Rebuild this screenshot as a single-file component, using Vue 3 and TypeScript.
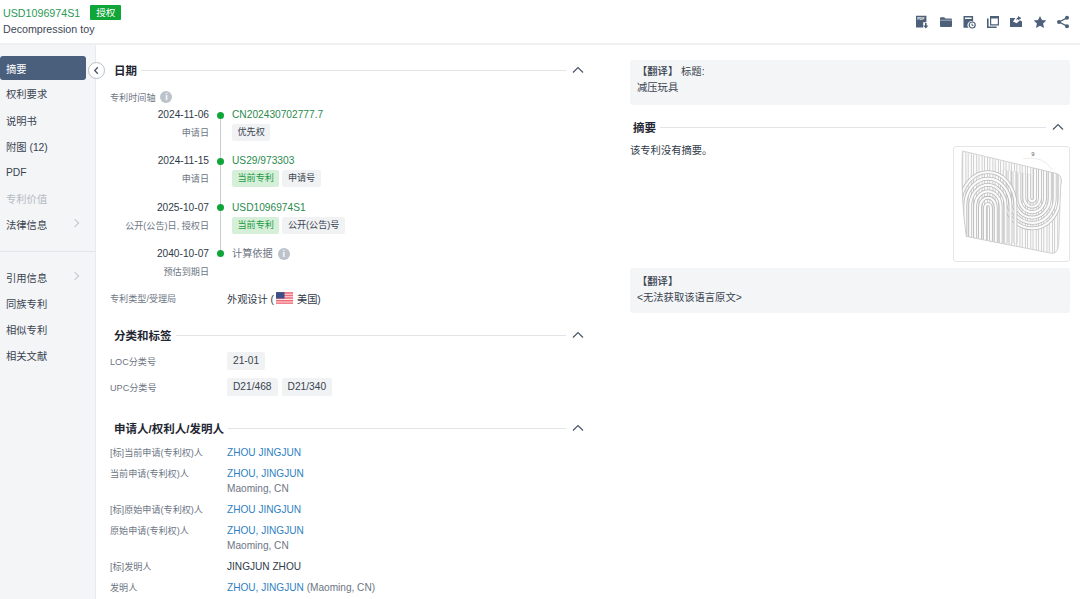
<script setup lang="ts">
interface TimeRow { date: string; label: string; link: string; muted?: boolean; tags: { t: string; on?: boolean }[] }
const rows: TimeRow[] = [
  { date: '2024-11-06', label: '申请日', link: 'CN202430702777.7', tags: [{ t: '优先权' }] },
  { date: '2024-11-15', label: '申请日', link: 'US29/973303', tags: [{ t: '当前专利', on: true }, { t: '申请号' }] },
  { date: '2025-10-07', label: '公开(公告)日, 授权日', link: 'USD1096974S1', tags: [{ t: '当前专利', on: true }, { t: '公开(公告)号' }] },
  { date: '2040-10-07', label: '预估到期日', link: '计算依据', muted: true, tags: [] },
]
const people = [
  { k: '[标]当前申请(专利权)人', v: 'ZHOU JINGJUN' },
  { k: '当前申请(专利权)人', v: 'ZHOU, JINGJUN', sub: 'Maoming, CN' },
  { k: '[标]原始申请(专利权)人', v: 'ZHOU JINGJUN' },
  { k: '原始申请(专利权)人', v: 'ZHOU, JINGJUN', sub: 'Maoming, CN' },
]
const stripes: string[] = Array.from({ length: 18 }, (_, i) => {
  const x = 10 + i * 5.5
  return `M${x} ${5 + (x - 9) * 0.23}V${91 + (x - 12) * 0.2}`
})
const radii = [3, 8, 13, 18, 23, 28]
const leftArches: string[] = radii.map(r => `M${34 - r} ${92 + (34 - r) * 0.1}V${62 - r * 0.1}A${r} ${r * 1.2} 0 0 1 ${34 + r} ${62 - r * 0.1}V${98}`)
const rightArches: string[] = radii.map(r => `M${79 - r} ${14 + (79 - r) * 0.18}V${52}A${r} ${r * 1.1} 0 0 0 ${79 + r} ${52}V${22}`)
</script>

<template>
  <div class="page">
    <header class="top">
      <div>
        <div class="idline"><span class="pid">USD1096974S1</span><span class="badge">授权</span></div>
        <div class="title">Decompression toy</div>
      </div>
      <div class="tools">
        <svg viewBox="0 0 14 14"><path d="M1 .8h10.4v6.4H8.2v5.4H1z"/><text x="2.2" y="5" font-size="3.6" fill="#fff" font-family="Liberation Sans" font-weight="700">PDF</text><path d="M10 8h1.6v2.6h1.8l-2.6 2.8-2.6-2.8H10z"/></svg>
        <svg viewBox="0 0 14 14"><path d="M1 3.2q0-1 1-1h3.2l1.2 1.3H12q1 0 1 1v6.6q0 1-1 1H2q-1 0-1-1z"/><path d="M1 5.2h12" stroke="#fff" stroke-width=".5"/></svg>
        <svg viewBox="0 0 14 14"><path d="M1.5 1h9.6v5.4a4 4 0 0 0-4.6 6.3H1.5zM3 2.6v1.5h6.6V2.6z" fill-rule="evenodd"/><circle cx="10.2" cy="10" r="3" fill="none" stroke="#4d6079" stroke-width="1.2"/><path d="M10 8.6v1.8h1.4" fill="none" stroke="#4d6079"/></svg>
        <svg viewBox="0 0 14 14"><path d="M4 1h9v9.4H4zM5.2 3.6v5.6h6.6V3.6z" fill-rule="evenodd"/><path d="M1 3.6h1.6v8h8V13H1z"/></svg>
        <svg viewBox="0 0 14 14"><path d="M1 3h5.4L4 6.6l3.6 1.6L11 5.2l2 1.2V12H1z"/><path d="M9 1l3.4 2.2L9 5.2V4L7 5.2 8 3l1-.6z"/></svg>
        <svg viewBox="0 0 14 14"><path d="M7 1l1.9 4 4.4.5-3.2 3 .9 4.4L7 10.7l-4 2.2.9-4.4-3.2-3 4.4-.5z"/></svg>
        <svg viewBox="0 0 14 14"><circle cx="11" cy="2.8" r="2"/><circle cx="3" cy="7" r="2"/><circle cx="11" cy="11.2" r="2"/><path d="M3 7l8-4.2M3 7l8 4.2" stroke="#4d6079" stroke-width="1.3" fill="none"/></svg>
      </div>
    </header>

    <div class="body">
      <nav class="side">
        <a class="item active">摘要</a>
        <a class="item">权利要求</a>
        <a class="item">说明书</a>
        <a class="item">附图 (12)</a>
        <a class="item">PDF</a>
        <a class="item off">专利价值</a>
        <a class="item">法律信息<i class="chev" /></a>
        <div class="rule" />
        <a class="item">引用信息<i class="chev" /></a>
        <a class="item">同族专利</a>
        <a class="item">相似专利</a>
        <a class="item">相关文献</a>
        <button class="collapse" aria-label="收起"><svg viewBox="0 0 10 10"><path d="M6.2 2L3.4 5l2.8 3" fill="none" stroke="#4a5568" stroke-width="1.2"/></svg></button>
      </nav>

      <main class="left">
        <section class="sec first">
          <div class="head"><h2>日期</h2><span class="line" /><svg class="up" viewBox="0 0 12 8"><path d="M1 6.5L6 1.5l5 5" fill="none" stroke="#4a5568" stroke-width="1.2"/></svg></div>
          <div class="tlhead">专利时间轴<span class="info">i</span></div>
          <div class="timeline">
            <div v-for="(r, i) in rows" :key="r.date" class="trow">
              <div class="tdate"><div class="d">{{ r.date }}</div><div class="dl">{{ r.label }}</div></div>
              <div class="tmark" :class="{ last: i === rows.length - 1 }"><span class="dot" /></div>
              <div class="tinfo">
                <div :class="r.muted ? 'calc' : 'glink'">{{ r.link }}<span v-if="r.muted" class="info">i</span></div>
                <div class="tags"><span v-for="t in r.tags" :key="t.t" class="tag" :class="{ on: t.on }">{{ t.t }}</span></div>
              </div>
            </div>
          </div>
          <div class="kv kind">
            <span class="k">专利类型/受理局</span>
            <span class="v">外观设计 (<svg class="flag" viewBox="0 0 16 11"><rect width="16" height="11" fill="#f06a78"/><path d="M0 2h16M0 4.4h16M0 6.8h16M0 9.2h16" stroke="#fbe4e6"/><rect width="8" height="6" fill="#3d4f85"/></svg>美国)</span>
          </div>
        </section>

        <section class="sec s2">
          <div class="head"><h2>分类和标签</h2><span class="line" /><svg class="up" viewBox="0 0 12 8"><path d="M1 6.5L6 1.5l5 5" fill="none" stroke="#4a5568" stroke-width="1.2"/></svg></div>
          <div class="kv cls"><span class="k">LOC分类号</span><span class="tags"><span class="tag big">21-01</span></span></div>
          <div class="kv cls"><span class="k">UPC分类号</span><span class="tags"><span class="tag big">D21/468</span><span class="tag big">D21/340</span></span></div>
        </section>

        <section class="sec s3">
          <div class="head"><h2>申请人/权利人/发明人</h2><span class="line" /><svg class="up" viewBox="0 0 12 8"><path d="M1 6.5L6 1.5l5 5" fill="none" stroke="#4a5568" stroke-width="1.2"/></svg></div>
          <div class="people">
            <div v-for="(p, i) in people" :key="i" class="kv person">
              <span class="k">{{ p.k }}</span>
              <span class="v"><span class="blue">{{ p.v }}</span><span v-if="p.sub" class="sub">{{ p.sub }}</span></span>
            </div>
            <div class="kv person"><span class="k">[标]发明人</span><span class="v dark">JINGJUN ZHOU</span></div>
            <div class="kv person"><span class="k">发明人</span><span class="v"><span class="blue">ZHOU, JINGJUN</span> <span class="gray">(Maoming, CN)</span></span></div>
          </div>
        </section>
      </main>

      <aside class="right">
        <div class="box t1"><div><b>【翻译】</b> 标题:</div><div>减压玩具</div></div>
        <div class="head abs"><h2>摘要</h2><span class="line" /><svg class="up" viewBox="0 0 12 8"><path d="M1 6.5L6 1.5l5 5" fill="none" stroke="#4a5568" stroke-width="1.2"/></svg></div>
        <div class="absbody">
          <p>该专利没有摘要。</p>
          <div class="thumb">
            <svg viewBox="0 0 116 116">
              <defs>
                <clipPath id="shape"><path d="M8 4L104 27Q111 30 108 40L106 98Q105 110 98 108L12 91Q6 50 8 4z"/></clipPath>
              </defs>
              <text x="78" y="9" font-size="6" fill="#555" font-family="Liberation Sans">9</text>
              <path d="M70 12Q90 8 100 24" fill="none" stroke="#ddd" stroke-width=".6"/>
              <g clip-path="url(#shape)" fill="none">
                <rect width="116" height="116" fill="#fbfbfb"/>
                <g stroke="#c6c6c6" stroke-width="4"><path v-for="(d, i) in stripes" :key="i" :d="d"/></g>
                <g stroke="#fbfbfb" stroke-width="2.4"><path v-for="(d, i) in stripes" :key="i" :d="d"/></g>
                <g stroke="#bdbdbd" stroke-width="3.8"><path v-for="(d, i) in rightArches" :key="i" :d="d"/></g>
                <g stroke="#fbfbfb" stroke-width="2.2"><path v-for="(d, i) in rightArches" :key="i" :d="d"/></g>
                <g stroke="#b8b8b8" stroke-width="3.8"><path v-for="(d, i) in leftArches" :key="i" :d="d"/></g>
                <g stroke="#fbfbfb" stroke-width="2.2"><path v-for="(d, i) in leftArches" :key="i" :d="d"/></g>
              </g>
              <path d="M8 4L104 27Q111 30 108 40L106 98Q105 110 98 108L12 91Q6 50 8 4z" fill="none" stroke="#c8c8c8" stroke-width=".8"/>
            </svg>
          </div>
        </div>
        <div class="box t2"><div><b>【翻译】</b></div><div>&lt;无法获取该语言原文&gt;</div></div>
      </aside>
    </div>
  </div>
</template>

<style>
html, body { margin: 0; background: #fff; overflow: hidden; }
</style>

<style scoped>
* { box-sizing: border-box; }
.page { width: 1080px; height: 599px; overflow: hidden; font-family: "Liberation Sans", "Noto Sans CJK SC", sans-serif; font-size: 11px; color: #2f3a4a; background: #fff; }
.top { height: 45px; display: flex; justify-content: space-between; align-items: flex-start; padding: 5px 10px 0 3px; border-bottom: 2px solid #eef0f2; }
.idline { display: flex; align-items: center; gap: 10px; height: 15px; }
.pid { color: #2b9a55; font-size: 10.7px; }
.badge { background: #10a537; color: #fff; font-size: 9.5px; width: 31px; height: 15px; line-height: 15px; text-align: center; border-radius: 1px; }
.title { margin-top: 2px; font-size: 10.7px; line-height: 15px; color: #3e4756; }
.tools { display: flex; gap: 9.5px; padding-top: 10px; }
.tools svg { width: 14px; height: 14px; fill: #4d6079; }
.body { display: flex; height: 554px; }
.side { position: relative; width: 96px; flex: none; background: #f3f5f7; padding-top: 11px; border-right: 1px solid #e8ebee; }
.item { display: flex; align-items: center; height: 26px; padding-left: 6px; font-size: 10.3px; color: #3a4350; position: relative; width: 86px; }
.item.active { background: #4a5f7c; color: #fff; height: 24px; border-radius: 3px; margin-bottom: 0; }
.item.active + .item { height: 27px; }
.item.off { color: #b4bac2; }
.chev { position: absolute; right: 8px; top: 9px; width: 6px; height: 6px; border-top: 1px solid #c2c7cd; border-right: 1px solid #c2c7cd; transform: rotate(45deg); }
.rule { height: 1px; background: #e2e5e8; margin: 14px 0 12px 0; }
.collapse { position: absolute; left: 88px; top: 17px; width: 17px; height: 17px; border-radius: 50%; border: 1px solid #b9bfc6; background: #fff; padding: 2px; display: flex; }
.collapse svg { width: 100%; height: 100%; }
.left { width: 504px; flex: none; padding: 0 0 0 14px; }
.head { display: flex; align-items: center; height: 16px; }
.left .head { margin: 0 16px 0 4px; }
.head h2 { margin: 0; font-size: 11.5px; color: #1f2733; font-weight: 700; white-space: nowrap; }
.line { flex: 1; height: 1px; background: #e2e5e8; margin-left: 4px; }
.up { width: 12px; height: 8px; margin-left: 6px; }
.first { padding-top: 17px; }
.tlhead { margin: 12px 0 0 0; height: 14px; display: flex; align-items: center; font-size: 9.1px; color: #6d7684; }
.info { display: inline-block; width: 12px; height: 12px; border-radius: 50%; background: #bcc3cb; color: #fff; font-size: 9px; line-height: 12px; text-align: center; margin-left: 5px; font-weight: 700; }
.timeline { margin-top: 4px; }
.trow { display: flex; height: 46.3px; }
.tdate { width: 99px; text-align: right; }
.d { font-size: 10.2px; line-height: 14px; color: #2f3a4a; }
.dl { font-size: 9.1px; line-height: 14px; margin-top: 4px; color: #6d7684; }
.tmark { width: 23px; position: relative; }
.tmark::before { content: ""; position: absolute; left: 10.5px; top: 6px; bottom: -6px; width: 1px; background: #c8cdd3; }
.tmark.last::before { display: none; }
.dot { position: absolute; left: 7.5px; top: 3.5px; width: 7px; height: 7px; border-radius: 50%; background: #10a537; }
.glink { font-size: 10.2px; line-height: 14px; color: #2b8a4e; }
.calc { font-size: 10.2px; line-height: 14px; color: #6d7684; display: flex; align-items: center; }
.tags { display: flex; gap: 3px; }
.tinfo .tags { margin-top: 2px; }
.tag { font-size: 9.1px; line-height: 17px; height: 17px; padding: 0 5.5px; background: #f0f2f4; border-radius: 2px; color: #3a4350; }
.tag.on { background: #d6efd9; color: #1c9a45; }
.tag.big { font-size: 10.2px; height: 18px; line-height: 18px; padding: 0 6px; }
.s2 .tags { gap: 4px; }
.kv { display: flex; }
.k { width: 117px; flex: none; font-size: 9.1px; color: #6d7684; }
.kind { margin-top: -2px; align-items: center; height: 14px; }
.kind .v { font-size: 10.2px; display: flex; align-items: center; }
.flag { width: 17px; height: 12px; margin: 0 4px 0 2px; }
.s2 { margin-top: 22px; }
.cls { margin: 9px 0 0 0; align-items: center; height: 18px; }
.s2 .cls + .cls { margin-top: 8px; }
.s3 { margin-top: 24px; }
.people { margin-top: 10px; }
.person { margin-bottom: 7px; line-height: 14px; }
.person .k { line-height: 14px; }
.person .v { font-size: 10.1px; }
.blue { color: #2f7fc1; }
.sub { display: block; color: #6d7684; margin-top: 1px; }
.gray { color: #6d7684; }
.dark { color: #2f3a4a; }
.right { width: 440px; margin-left: 30px; flex: none; padding-top: 15px; }
.box { background: #f3f5f7; border-radius: 3px; padding: 4px 7px; font-size: 10.3px; line-height: 16px; color: #3a4350; }
.box b { font-weight: 500; }
.t1 { height: 45px; }
.abs { margin: 14px 6px 0 3px; }
.absbody { display: flex; justify-content: space-between; margin-top: 8px; }
.absbody p { margin: 0; font-size: 10.3px; line-height: 15px; }
.thumb { width: 117px; height: 116px; border: 1px solid #e4e7ea; border-radius: 3px; margin-top: 3px; }
.thumb svg { width: 100%; height: 100%; display: block; }
.t2 { margin-top: 6px; height: 45px; padding-top: 6px; }
</style>
